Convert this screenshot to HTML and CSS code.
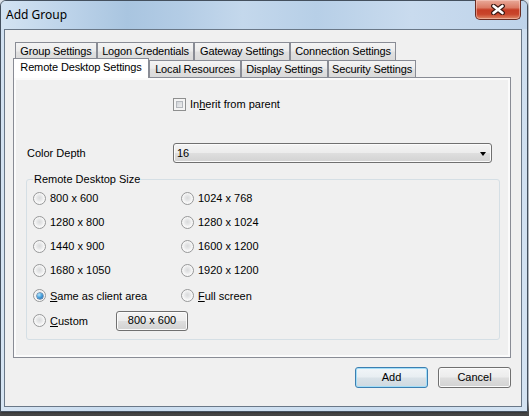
FILE: index.html
```html
<!DOCTYPE html>
<html>
<head>
<meta charset="utf-8">
<title>Add Group</title>
<link rel="stylesheet" href="styles.css">
</head>
<body>
<div class="desktop">
  <div class="window">
    <div class="titlebar">
      <span class="title">Add Group</span>
      <div class="close">
        <svg width="14" height="11" viewBox="0 0 14 11">
          <path d="M2.5 2 L11.5 9 M11.5 2 L2.5 9" stroke="#3b1812" stroke-width="4.8" stroke-linecap="round" fill="none"/>
          <path d="M2.5 2 L11.5 9 M11.5 2 L2.5 9" stroke="#ffffff" stroke-width="2.6" stroke-linecap="round" fill="none"/>
        </svg>
      </div>
    </div>
    <div class="client">
      <div class="tabctl">
        <div class="tabrow row1">
          <div class="tab t-group">Group Settings</div>
          <div class="tab t-logon">Logon Credentials</div>
          <div class="tab t-gateway">Gateway Settings</div>
          <div class="tab t-conn">Connection Settings</div>
        </div>
        <div class="tabrow row2">
          <div class="tab t-remote selected">Remote Desktop Settings</div>
          <div class="tab t-local">Local Resources</div>
          <div class="tab t-display">Display Settings</div>
          <div class="tab t-security">Security Settings</div>
        </div>
        <div class="panel">
          <div class="check-row">
            <span class="checkbox"></span>
            <span class="label">In<u>h</u>erit from parent</span>
          </div>
          <div class="depth-row">
            <span class="depth-label">Color Depth</span>
            <div class="combo">
              <span>16</span>
              <span class="arrow"></span>
            </div>
          </div>
          <fieldset class="group">
            <legend>Remote Desktop Size</legend>
            <div class="sizes">
              <div class="opt"><span class="radio"></span><span>800 x 600</span></div>
              <div class="opt"><span class="radio"></span><span>1024 x 768</span></div>
              <div class="opt"><span class="radio"></span><span>1280 x 800</span></div>
              <div class="opt"><span class="radio"></span><span>1280 x 1024</span></div>
              <div class="opt"><span class="radio"></span><span>1440 x 900</span></div>
              <div class="opt"><span class="radio"></span><span>1600 x 1200</span></div>
              <div class="opt"><span class="radio"></span><span>1680 x 1050</span></div>
              <div class="opt"><span class="radio"></span><span>1920 x 1200</span></div>
              <div class="opt"><span class="radio checked"></span><span><u>S</u>ame as client area</span></div>
              <div class="opt"><span class="radio"></span><span><u>F</u>ull screen</span></div>
              <div class="opt custom"><span class="radio"></span><span class="custom-label"><u>C</u>ustom</span><span class="btn small">800 x 600</span></div>
            </div>
          </fieldset>
        </div>
      </div>
      <div class="actions">
        <span class="btn default">Add</span>
        <span class="btn">Cancel</span>
      </div>
    </div>
  </div>
</div>
</body>
</html>
```
FILE: styles.css
```css
html, body {
  margin: 0;
  padding: 0;
}
body {
  background: #5d5d5d;
  font-family: "Liberation Sans", Arial, sans-serif;
  font-size: 11px;
  color: #000;
}
.desktop {
  width: 529px;
  height: 416px;
  overflow: hidden;
  background: linear-gradient(to bottom, #e4ebf3 0, #d0d9e2 400px, #555 412px, #444 416px);
}
.window {
  width: 528px;
  height: 412px;
  box-sizing: border-box;
  border: 1px solid #44505e;
  border-radius: 6px 6px 0 0;
  padding: 0 5px 4px 3px;
  display: flex;
  flex-direction: column;
  background:
    linear-gradient(90deg, rgba(255,255,255,0.25) 0, rgba(255,255,255,0) 20%, rgba(255,255,255,0.15) 45%, rgba(255,255,255,0) 70%, rgba(255,255,255,0.2) 100%),
    linear-gradient(to bottom, #bcd3ea 0, #c3d7ec 40px, #c9dcef 100%);
  box-shadow: 0 1px 3px rgba(0,0,0,0.5);
}
.titlebar {
  height: 28px;
  flex: none;
  display: flex;
  justify-content: space-between;
  align-items: flex-start;
  background: linear-gradient(90deg, #d3e3f2 0%, #bed4ea 12%, #a9c5e0 24%, #b3cce5 34%, #c4d8ec 46%, #b7cfe7 60%, #c9dbee 78%, #bed3ea 100%);
  margin: 0 -5px 0 -3px;
  padding: 0 5px 0 3px;
  border-radius: 5px 5px 0 0;
}
.title {
  font-family: "Noto Sans", "Open Sans", sans-serif;
  font-size: 12px;
  line-height: 16px;
  margin: 6px 0 0 2px;
  color: #000;
}
.close {
  width: 46px;
  height: 20px;
  box-sizing: border-box;
  margin-top: -1px;
  margin-right: 1px;
  border: 1px solid #6a2c22;
  border-top: none;
  border-radius: 0 0 5px 5px;
  background: linear-gradient(to bottom, #e9aa9a 0%, #db7b65 40%, #c63d25 52%, #c9452b 75%, #df8a68 100%);
  box-shadow: inset 0 0 0 1px rgba(255,220,210,0.45);
  display: flex;
  align-items: center;
  justify-content: center;
}
.client {
  flex: 1;
  border: 1px solid #6a7888;
  background: #f0f0f0;
  display: flex;
  flex-direction: column;
}
.tabctl {
  margin: 12px 0 0 8px;
  width: 498px;
}
.tabrow {
  display: flex;
  align-items: flex-start;
}
.row1 {
  height: 18px;
  margin-left: 2px;
}
.row2 {
  height: 17px;
}
.tab {
  box-sizing: border-box;
  height: 18px;
  border: 1px solid #898c95;
  border-bottom: none;
  background: linear-gradient(to bottom, #f4f4f4 0%, #ececec 45%, #e0e0e0 55%, #dadada 100%);
  text-align: center;
  line-height: 17px;
  white-space: nowrap;
  letter-spacing: -0.15px;
}
.row2 .tab {
  height: 17px;
  line-height: 16px;
}
.row2 .tab.selected {
  height: 20px;
  margin-top: -2px;
  margin-bottom: -1px;
  line-height: 17px;
  background: #ffffff;
  position: relative;
  z-index: 1;
}
.t-group { width: 82px; }
.t-logon { width: 97px; }
.t-gateway { width: 96px; }
.t-conn { width: 106px; }
.t-remote { width: 136px; }
.t-local { width: 92px; }
.t-display { width: 87px; }
.t-security { width: 88px; }
.panel {
  box-sizing: border-box;
  width: 498px;
  height: 281px;
  border: 1px solid #898c95;
  box-shadow: inset 0 0 0 2px #fbfbfb;
  background: #f0f0f0;
  padding: 20px 10px 0 12px;
}
.check-row {
  display: flex;
  align-items: center;
  height: 13px;
  margin-left: 147px;
}
.checkbox {
  width: 13px;
  height: 13px;
  box-sizing: border-box;
  border: 1px solid #8e8f8f;
  background: #f4f4f4;
  position: relative;
  flex: none;
}
.checkbox::after {
  content: "";
  position: absolute;
  left: 2px;
  top: 2px;
  box-sizing: content-box;
  width: 5px;
  height: 5px;
  border: 1px solid #b4b8bd;
  background: linear-gradient(135deg, #cfd3d8, #eeeeee);
}
.label {
  margin-left: 4px;
  line-height: 13px;
}
.depth-row {
  display: flex;
  align-items: center;
  height: 20px;
  margin-top: 32px;
}
.depth-label {
  width: 147px;
  padding-left: 1px;
  box-sizing: border-box;
  flex: none;
}
.combo {
  box-sizing: border-box;
  width: 319px;
  height: 20px;
  border: 1px solid #707070;
  border-radius: 3px;
  background: linear-gradient(to bottom, #f4f4f4 0%, #ececec 48%, #dedede 52%, #d2d2d2 100%);
  box-shadow: inset 0 0 0 1px #fbfbfb;
  display: flex;
  align-items: center;
  justify-content: space-between;
  padding: 0 5px 0 3px;
}
.arrow {
  width: 0;
  height: 0;
  border-left: 3.5px solid transparent;
  border-right: 3.5px solid transparent;
  border-top: 4px solid #000;
  margin-top: 1px;
}
.group {
  margin: 10px 0 0 0;
  width: 474px;
  box-sizing: border-box;
  border: 1px solid #d5dfe5;
  border-radius: 3px;
  padding: 0 0 7px 6px;
  min-width: 0;
}
.group legend {
  padding: 0 1px;
  line-height: 13px;
  margin-left: 0;
}
.sizes {
  display: grid;
  grid-template-columns: 148px 1fr;
  grid-template-rows: 24px 24px 24px 24px 27px 23px;
}
.opt {
  display: flex;
  align-items: center;
}
.opt > span + span {
  margin-left: 4px;
}
.radio {
  width: 13px;
  height: 13px;
  box-sizing: border-box;
  border-radius: 50%;
  border: 1px solid #979899;
  background: radial-gradient(circle at 50% 45%, #d9dadb 0, #e6e7e8 2.5px, #f5f5f5 4.5px, #fbfbfb 6px);
  position: relative;
  flex: none;
}
.radio.checked::after {
  content: "";
  position: absolute;
  left: 2.5px;
  top: 2.5px;
  width: 6px;
  height: 6px;
  border-radius: 50%;
  background: radial-gradient(circle at 35% 30%, #b8e6fb 0, #4aa3de 45%, #14589e 100%);
  box-shadow: 0 0 0 0.5px #1c4d80;
}
.custom {
  grid-column: 1 / 3;
}
.opt .custom-label {
  width: 66px;
  flex: none;
}
.btn {
  box-sizing: border-box;
  width: 73px;
  height: 21px;
  border: 1px solid #707070;
  border-radius: 3px;
  background: linear-gradient(to bottom, #f4f4f4 0%, #ececec 48%, #dedede 52%, #d2d2d2 100%);
  box-shadow: inset 0 0 0 1px #fbfbfb;
  display: flex;
  align-items: center;
  justify-content: center;
  line-height: 13px;
}
.opt .btn.small {
  width: 72px;
  height: 20px;
  margin-left: 0;
  flex: none;
}
.btn.default {
  border-color: #3c7fb1;
  box-shadow: inset 0 0 0 1px #a3def8;
  background: linear-gradient(to bottom, #f1f5f8 0%, #e8eef2 48%, #d9e2e8 52%, #cfd9e0 100%);
}
.actions {
  display: flex;
  justify-content: flex-end;
  gap: 10px;
  margin-top: 9px;
  padding-right: 10px;
}
```
